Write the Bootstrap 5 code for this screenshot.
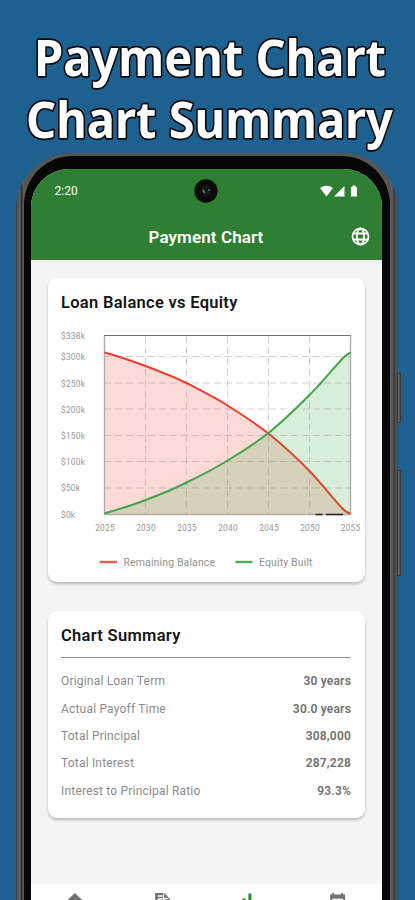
<!DOCTYPE html>
<html lang="en">
<head>
<meta charset="utf-8">
<meta name="viewport" content="width=device-width, initial-scale=1">
<title>Payment Chart</title>
<link href="https://cdn.jsdelivr.net/npm/bootstrap@5.3.0/dist/css/bootstrap.min.css" rel="stylesheet">
<style>
html,body{height:100%;overflow:hidden}
body{background:#1e6190;font-family:Roboto,"Liberation Sans",sans-serif;width:415px}
.stage{height:900px;position:relative}
.headline{height:153px;flex:none}
.headline svg{overflow:visible}
.headline text{font-family:"Noto Sans","Open Sans",sans-serif;font-weight:700;font-size:51px;fill:#fff;stroke:#080808;stroke-width:3.4px;paint-order:stroke;stroke-linejoin:round}
.rim{width:382px;height:747px;margin-left:16px;padding:3px 7px 0 7px;border-radius:56px 56px 0 0;background:linear-gradient(90deg,#3c3c3c 0,#555 2px,#626262 4px,#3a3a3a 5px,#222 6px,#666 7px,#5b5b5b 8px,#555 9px,#555 374px,#5b5b5b 375px,#555 377px,#333 378px,#555 380px,#444 382px);flex:none}
.bezel{height:744px;background:#080707;border-radius:49px 49px 0 0;padding:13px 8.5px 0 6.5px;border:solid #5a5a5a;border-width:0 1px}
.display-area{height:731px;background:#f4f4f4;border-radius:38px 38px 0 0;overflow:hidden}
.appbar{height:91px;background:#2f7f33;color:#fff;flex:none}
.status{height:44px;padding:0 24px 0 24px;font-size:12px}
.appbar-title{font-size:17px;font-weight:600;letter-spacing:.1px;padding:2px 0 0 5px}
.panel{border-radius:9px;background:#fff;margin:0 17px 0 17px;box-shadow:0 2px 3px rgba(0,0,0,.24);padding:0 13.5px 0 13.5px;flex:none}
.panel-a{margin-top:18px;height:304px}
.panel-b{margin-top:29px;height:207px}
.panel h2{font-size:16.5px;font-weight:600;color:#151515;margin:0;letter-spacing:.29px;line-height:20px;padding-top:15px}
.chart{display:block;overflow:visible;margin-left:-.5px}
.tick{font-size:8.4px;fill:#999;letter-spacing:.2px}
.keys{font-size:10.5px;fill:#929292}
.divider{height:1.5px;background:#8b8b8b;margin-top:10.5px}
.facts{padding-top:9.7px;font-size:12px;color:#8b8b8b;letter-spacing:.19px}
.facts li{height:27.35px}
.facts b{color:#707070;font-weight:600}
.tabs{height:16px;background:#fff;overflow:hidden}
.camera{left:194px;top:179px}
.side{right:14px;width:4px;background:#5d5a58;border:1px solid #393735}
.side-a{top:373px;height:50px}
.side-b{top:470px;height:106px}
</style>
<script src="https://cdn.jsdelivr.net/npm/bootstrap@5.3.0/dist/js/bootstrap.bundle.min.js"></script>
</head>
<body>
<div class="stage d-flex flex-column overflow-hidden">
  <header class="headline">
    <svg width="415" height="153" role="img" aria-label="Payment Chart, Chart Summary">
      <text x="34" y="76.300" textLength="352" lengthAdjust="spacingAndGlyphs">Payment Chart</text>
      <text x="26" y="137.500" textLength="367" lengthAdjust="spacingAndGlyphs">Chart Summary</text>
    </svg>
  </header>
  <div class="position-absolute side side-a"></div>
  <div class="position-absolute side side-b"></div>
  <div class="rim">
    <div class="bezel">
      <main class="display-area d-flex flex-column">
        <div class="appbar">
          <div class="status d-flex justify-content-between align-items-center">
            <span>2:20</span>
            <svg width="38" height="12" fill="#fff"><path d="M0 3Q6.500-1.500 13 3L6.500 11.500zM14 11.500 24.500 1v10.500zM31 2h1.500V.5h3V2h1.500v9.500h-6z"/></svg>
          </div>
          <div class="d-flex align-items-center justify-content-between px-2">
            <span style="width:22px"></span>
            <span class="appbar-title">Payment Chart</span>
            <svg width="27" height="47" viewBox="0 0 27 47" fill="none" stroke="#fff" stroke-width="1.800"><circle cx="14.500" cy="23.500" r="8"/><ellipse cx="14.500" cy="23.500" rx="3.600" ry="8"/><path d="M7 20.500h15M7 26.500h15"/></svg>
          </div>
        </div>
        <section class="panel panel-a">
          <h2>Loan Balance vs Equity</h2>
          <svg class="chart" width="290" height="260" viewBox="61 313 290 260">
            <path d="M104.500 352.500C118 356 132 361 145.500 366C159 371 173 376.500 186.500 383C200 390 214 397 227.500 405.500C241 414 255 423 268.500 433.500C282 444.500 296 457 309.500 471C323 485 334 500 343 509Q347 513 350.500 513.500L350.500 514.500H104.500z" fill="#f44336" fill-opacity=".2"/>
            <path d="M104.500 513.500C118 509.500 132 505.500 145.500 500C159 495 173 489.500 186.500 482.500C200 476 214 469 227.500 460.500C241 452.500 255 443.500 268.500 433C282 422 296 408.500 309.500 395C320 385 331 371 343 358Q347 354 350.500 352.300V514.500H104.500z" fill="#4caf50" fill-opacity=".21"/>
            <path d="M145.500 336V514M186.500 336V514M227.500 336V514M268.500 336V514M309.500 336V514M104 356.500H350M104 383H350M104 409H350M104 435.500H350M104 461.500H350M104 488H350" stroke="#777" stroke-opacity=".32" stroke-dasharray="7 4"/>
            <path d="M104.500 335.500V514.500H350.500V335.500" fill="none" stroke="#adadad" stroke-width="1.400"/>
            <path d="M104 335.500H351" stroke="#777" stroke-width="1.200"/>
            <path d="M104.500 352.500C118 356 132 361 145.500 366C159 371 173 376.500 186.500 383C200 390 214 397 227.500 405.500C241 414 255 423 268.500 433.500" fill="none" stroke="#ee3d31" stroke-width="2"/>
            <path d="M268.500 433.500C282 444.500 296 457 309.500 471C323 485 334 500 343 509Q347 513 350.500 513.500" fill="none" stroke="#d64a2b" stroke-width="2"/>
            <path d="M104.500 513.500C118 509.500 132 505.500 145.500 500C159 495 173 489.500 186.500 482.500C200 476 214 469 227.500 460.500C241 452.500 255 443.500 268.500 433C282 422 296 408.500 309.500 395C320 385 331 371 343 358Q347 354 350.500 352.300" fill="none" stroke="#43a548" stroke-width="2"/>
            <path d="M315.500 514.500h7M326 514.500h17" stroke="#222" stroke-width="1.500"/>
            <g class="tick">
              <text x="61" y="339">$338k</text><text x="61" y="359.500">$300k</text><text x="61" y="386.500">$250k</text><text x="61" y="412.500">$200k</text><text x="61" y="438.500">$150k</text><text x="61" y="465">$100k</text><text x="61" y="491">$50k</text><text x="61" y="517.500">$0k</text>
            </g>
            <g class="tick" text-anchor="middle">
              <text x="105" y="531">2025</text><text x="146" y="531">2030</text><text x="187" y="531">2035</text><text x="228" y="531">2040</text><text x="269" y="531">2045</text><text x="310" y="531">2050</text><text x="350.500" y="531">2055</text>
            </g>
            <path d="M99.500 562h17.500" stroke="#ef5950" stroke-width="2.400"/><path d="M235.500 562h17" stroke="#4fae54" stroke-width="2.400"/>
            <g class="keys"><text x="123.500" y="565.700" textLength="91.500">Remaining Balance</text><text x="259" y="565.700" textLength="53.500">Equity Built</text></g>
          </svg>
        </section>
        <section class="panel panel-b">
          <h2>Chart Summary</h2>
          <div class="divider"></div>
          <ul class="facts list-unstyled mb-0">
            <li class="d-flex justify-content-between align-items-center"><span>Original Loan Term</span><b>30 years</b></li>
            <li class="d-flex justify-content-between align-items-center"><span>Actual Payoff Time</span><b>30.0 years</b></li>
            <li class="d-flex justify-content-between align-items-center"><span>Total Principal</span><b>308,000</b></li>
            <li class="d-flex justify-content-between align-items-center"><span>Total Interest</span><b>287,228</b></li>
            <li class="d-flex justify-content-between align-items-center"><span>Interest to Principal Ratio</span><b>93.3%</b></li>
          </ul>
        </section>
        <nav class="tabs d-flex mt-auto">
          <svg width="352" height="16" viewBox="30.500 884 352 16" fill="#717171"><path d="M65 902l9.500-9 9.500 9zM155 893h9l6 6v3h-15z"/><path d="M157.500 896h5M157.500 899h8" stroke="#fff" stroke-width="1.300"/><path d="M163.500 893.500v5h5" fill="none" stroke="#fff"/><path d="M330.500 894.500h2V893h2v1.500h7V893h2v1.500h2V902h-15z"/><path d="M332.500 898.700h11V901h-11z" fill="#fff"/><path d="M248.500 893.500h3V902h-3zM242.500 898.500h3.300V902h-3.300z" fill="#2f8b36"/></svg>
        </nav>
      </main>
    </div>
  </div>
  <svg class="camera position-absolute" width="24" height="24"><circle cx="12" cy="12" r="11.700" fill="#090b09"/><circle cx="12" cy="12" r="5" fill="#171717"/><path d="m8.500 11 2.500 3M14.500 10.500l1 1" stroke="#777" stroke-width="1.500"/></svg>
</div>
</body>
</html>
